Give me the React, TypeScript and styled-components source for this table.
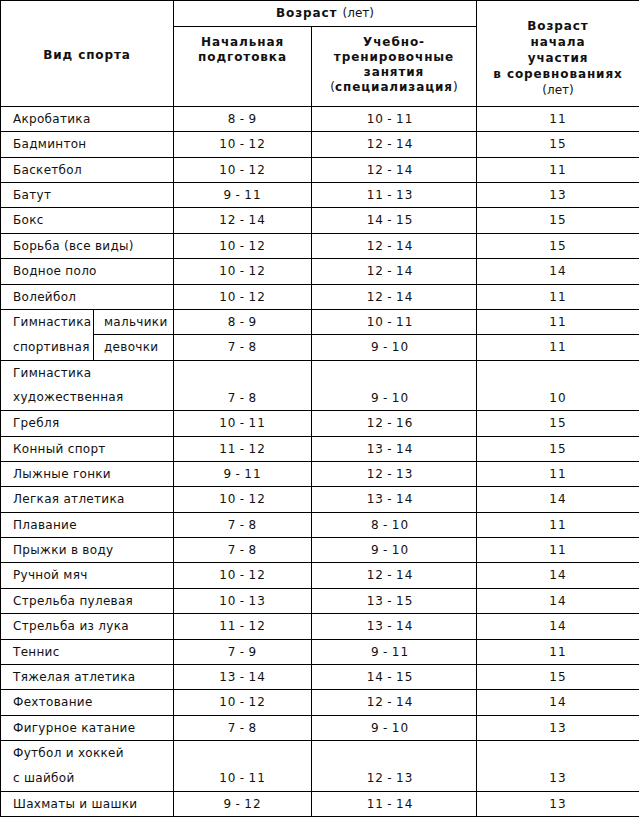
import React from "react";
import styled, { createGlobalStyle } from "styled-components";

const Global = createGlobalStyle`
  html, body { margin: 0; padding: 0; background: #fff; }
  body { font-family: "DejaVu Sans", "Liberation Sans", sans-serif; color: #000; }
`;

const ROW = 25.36;

const Table = styled.table`
  width: 639px;
  table-layout: fixed;
  border-collapse: collapse;
  font-size: 12px;
  color: #111;
`;

const Th = styled.th<{ $align?: "top" | "middle"; $lh?: number; $pt?: number }>`
  border: 1px solid #000;
  padding: ${(p) => p.$pt ?? 0}px 4px 0;
  font-weight: 700;
  letter-spacing: 0.9px;
  line-height: ${(p) => p.$lh ?? 15}px;
  text-align: center;
  vertical-align: ${(p) => p.$align ?? "middle"};
`;

const HeadTop = styled(Th)`
  height: 25px;
`;

const HeadSub = styled(Th)`
  height: 71px;
  padding-top: 8px;
`;

const Light = styled.span`
  font-weight: 400;
  letter-spacing: 0;
`;

const NameCell = styled.td<{ $lines?: number }>`
  border: 1px solid #000;
  padding: 0 0 0 12px;
  line-height: ${(p) => ((p.$lines ?? 1) > 1 ? ROW - 0.5 : ROW - 1)}px;
  vertical-align: middle;
  white-space: nowrap;
  letter-spacing: 0.3px;
`;

const SubCell = styled(NameCell)`
  padding-left: 10px;
`;

const NumCell = styled.td<{ $bottom?: boolean; $shift?: number }>`
  border: 1px solid #000;
  padding: 0 ${(p) => p.$shift ?? 0}px 0 0;
  line-height: ${ROW - 1}px;
  text-align: center;
  vertical-align: ${(p) => (p.$bottom ? "bottom" : "middle")};
  letter-spacing: 1px;
`;

type Row = { name: string; a: string; b: string; c: string; lines?: number };

const rowsTop: Row[] = [
  { name: "Акробатика", a: "8-9", b: "10-11", c: "11" },
  { name: "Бадминтон", a: "10-12", b: "12-14", c: "15" },
  { name: "Баскетбол", a: "10-12", b: "12-14", c: "11" },
  { name: "Батут", a: "9-11", b: "11-13", c: "13" },
  { name: "Бокс", a: "12-14", b: "14-15", c: "15" },
  { name: "Борьба (все виды)", a: "10-12", b: "12-14", c: "15" },
  { name: "Водное поло", a: "10-12", b: "12-14", c: "14" },
  { name: "Волейбол", a: "10-12", b: "12-14", c: "11" },
];

const rowsBottom: Row[] = [
  { name: "Гимнастика\nхудожественная", a: "7-8", b: "9-10", c: "10", lines: 2 },
  { name: "Гребля", a: "10-11", b: "12-16", c: "15" },
  { name: "Конный спорт", a: "11-12", b: "13-14", c: "15" },
  { name: "Лыжные гонки", a: "9-11", b: "12-13", c: "11" },
  { name: "Легкая атлетика", a: "10-12", b: "13-14", c: "14" },
  { name: "Плавание", a: "7-8", b: "8-10", c: "11" },
  { name: "Прыжки в воду", a: "7-8", b: "9-10", c: "11" },
  { name: "Ручной мяч", a: "10-12", b: "12-14", c: "14" },
  { name: "Стрельба пулевая", a: "10-13", b: "13-15", c: "14" },
  { name: "Стрельба из лука", a: "11-12", b: "13-14", c: "14" },
  { name: "Теннис", a: "7-9", b: "9-11", c: "11" },
  { name: "Тяжелая атлетика", a: "13-14", b: "14-15", c: "15" },
  { name: "Фехтование", a: "10-12", b: "12-14", c: "14" },
  { name: "Фигурное катание", a: "7-8", b: "9-10", c: "13" },
  { name: "Футбол и хоккей\nс шайбой", a: "10-11", b: "12-13", c: "13", lines: 2 },
  { name: "Шахматы и шашки", a: "9-12", b: "11-14", c: "13" },
];

const fmt = (s: string) => s.replace("-", "\u2009-\u2009");

const Lines = ({ text }: { text: string }) => (
  <>
    {text.split("\n").map((l, i) => (
      <React.Fragment key={i}>
        {i > 0 && <br />}
        {l}
      </React.Fragment>
    ))}
  </>
);

const DataRow = ({ r }: { r: Row }) => (
  <tr>
    <NameCell colSpan={2} $lines={r.lines}>
      <Lines text={r.name} />
    </NameCell>
    <NumCell $bottom={!!r.lines}>{fmt(r.a)}</NumCell>
    <NumCell $bottom={!!r.lines} $shift={8}>{fmt(r.b)}</NumCell>
    <NumCell $bottom={!!r.lines}>{r.c}</NumCell>
  </tr>
);

export default function App() {
  return (
    <>
      <Global />
      <Table>
        <colgroup>
          <col style={{ width: 93 }} />
          <col style={{ width: 80 }} />
          <col style={{ width: 138 }} />
          <col style={{ width: 165 }} />
          <col style={{ width: 163 }} />
        </colgroup>
        <thead>
          <tr>
            <HeadTop rowSpan={2} colSpan={2} $pt={3}>
              Вид спорта
            </HeadTop>
            <HeadTop colSpan={2}>
              Возраст <Light>(лет)</Light>
            </HeadTop>
            <HeadTop rowSpan={2} $lh={16} $pt={8}>
              Возраст
              <br />
              начала
              <br />
              участия
              <br />в соревнованиях
              <br />
              <Light>(лет)</Light>
            </HeadTop>
          </tr>
          <tr>
            <HeadSub $align="top">
              Начальная
              <br />
              подготовка
            </HeadSub>
            <HeadSub $align="top">
              Учебно-
              <br />
              тренировочные
              <br />
              занятия
              <br />
              <Light>(</Light>специализация<Light>)</Light>
            </HeadSub>
          </tr>
        </thead>
        <tbody>
          {rowsTop.map((r) => (
            <DataRow key={r.name} r={r} />
          ))}
          <tr>
            <NameCell rowSpan={2}>
              Гимнастика
              <br />
              спортивная
            </NameCell>
            <SubCell>мальчики</SubCell>
            <NumCell>{fmt("8-9")}</NumCell>
            <NumCell $shift={8}>{fmt("10-11")}</NumCell>
            <NumCell>11</NumCell>
          </tr>
          <tr>
            <SubCell>девочки</SubCell>
            <NumCell>{fmt("7-8")}</NumCell>
            <NumCell $shift={8}>{fmt("9-10")}</NumCell>
            <NumCell>11</NumCell>
          </tr>
          {rowsBottom.map((r) => (
            <DataRow key={r.name} r={r} />
          ))}
        </tbody>
      </Table>
    </>
  );
}
